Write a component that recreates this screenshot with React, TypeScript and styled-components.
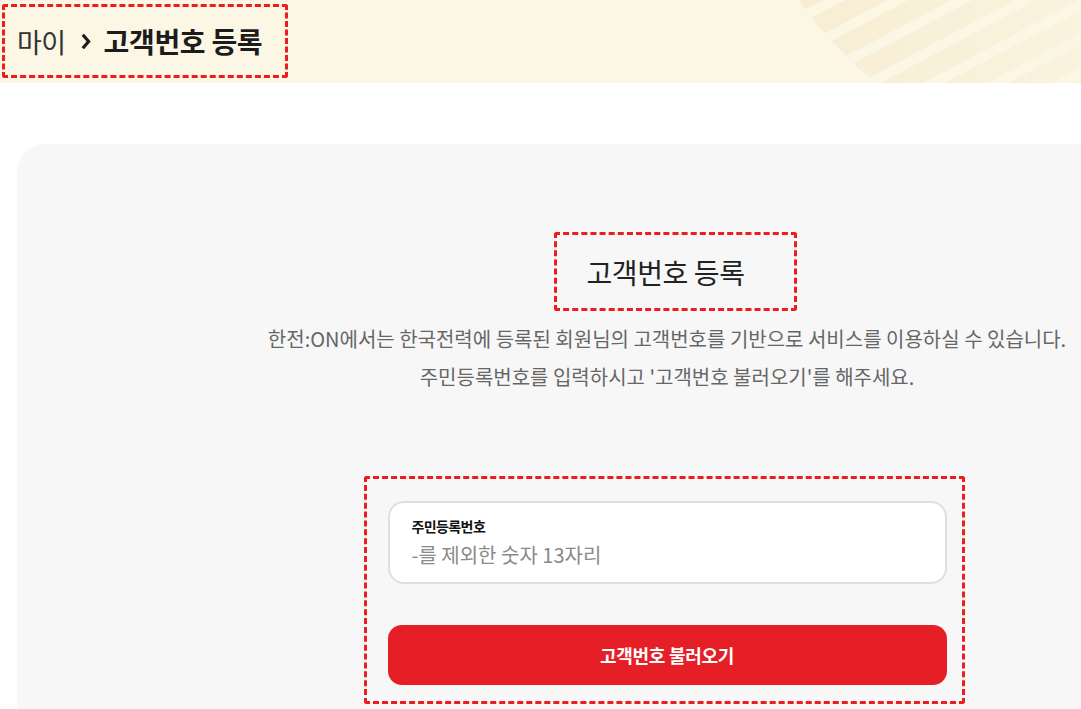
import React from 'react';
import styled, { createGlobalStyle } from 'styled-components';

const GlobalStyle = createGlobalStyle`
  body {
    margin: 0;
    background: #ffffff;
    overflow: hidden;
    font-family: 'Noto Sans CJK KR', 'Noto Sans', sans-serif;
  }
`;

const StyledPage = styled.div({
  width: 1081,
  height: 709,
  overflow: 'hidden',
});

const StyledHeader = styled.header({
  position: 'relative',
  height: 83,
  background: '#FCF6E4',
  padding: '4px 0 0 2px',
  boxSizing: 'border-box',
  overflow: 'hidden',
});

const StyledStripes = styled.svg({
  position: 'absolute',
  top: 0,
  right: 0,
});

const StyledHighlight = styled.div<{ $pad: string }>(({ $pad }) => ({
  border: '3px dashed #EE1C1C',
  borderRadius: 3,
  padding: $pad,
  boxSizing: 'border-box',
  position: 'relative',
}));

const StyledCrumbBox = styled(StyledHighlight)({
  display: 'inline-flex',
  alignItems: 'center',
  width: 286,
  height: 74,
});

const StyledCrumb = styled.span<{ $bold?: boolean }>(({ $bold }) => ({
  fontSize: $bold ? 28 : 27,
  fontWeight: $bold ? 700 : 400,
  color: $bold ? '#1c1c1c' : '#333333',
  letterSpacing: $bold ? -0.3 : -0.6,
}));

const StyledChevron = styled.svg({
  margin: '0 12px 0 16px',
});

const StyledCard = styled.section({
  marginTop: 61,
  marginLeft: 17,
  width: 1300,
  minHeight: 620,
  background: '#F7F7F7',
  borderRadius: 28,
  paddingTop: 88,
  boxSizing: 'border-box',
});

const StyledTitleRow = styled.div({
  display: 'flex',
  justifyContent: 'center',
  paddingLeft: 17,
});

const StyledTitleBox = styled(StyledHighlight)({
  height: 79,
  display: 'flex',
  alignItems: 'center',
});

const StyledTitle = styled.h2({
  margin: 0,
  fontSize: 28,
  fontWeight: 400,
  color: '#222222',
  letterSpacing: -0.4,
});

const StyledDesc = styled.p({
  margin: '9px 0 0',
  textAlign: 'center',
  fontSize: 20,
  lineHeight: '38px',
  color: '#666666',
  letterSpacing: 0,
});

const StyledFormArea = styled.div({
  width: 559,
  margin: '80px auto 0',
});

const StyledFormBox = styled(StyledHighlight)({
  margin: '0 -18px 0 -24px',
});

const StyledField = styled.label({
  display: 'flex',
  flexDirection: 'column',
  justifyContent: 'center',
  height: 83,
  background: '#ffffff',
  border: '2px solid #DDDFE3',
  borderRadius: 16,
  padding: '0 22px',
  boxSizing: 'border-box',
});

const StyledFieldLabel = styled.span({
  fontSize: 14,
  fontWeight: 700,
  color: '#111111',
  lineHeight: '18px',
  letterSpacing: -0.6,
});

const StyledInput = styled.input({
  border: 'none',
  outline: 'none',
  padding: 0,
  marginTop: 6,
  fontFamily: 'inherit',
  fontSize: 20,
  lineHeight: '28px',
  color: '#333333',
  background: 'transparent',
  letterSpacing: 0,
  '&::placeholder': {
    color: '#8A8A8A',
  },
});

const StyledButton = styled.button({
  display: 'block',
  width: '100%',
  height: 60,
  marginTop: 41,
  border: 'none',
  borderRadius: 14,
  background: '#E61E25',
  color: '#ffffff',
  fontFamily: 'inherit',
  fontSize: 18,
  fontWeight: 700,
  letterSpacing: -0.3,
  cursor: 'pointer',
});

const Stripes = () => (
  <StyledStripes width="300" height="83" viewBox="0 0 300 83">
    <defs>
      <pattern
        id="stripe-pattern"
        width="10"
        height="30"
        patternUnits="userSpaceOnUse"
        patternTransform="rotate(-28)"
      >
        <rect width="10" height="20" fill="#F6EDD2" />
      </pattern>
      <linearGradient id="stripe-fade" x1="0" y1="0" x2="1" y2="0">
        <stop offset="0" stopColor="#fff" stopOpacity="1" />
        <stop offset="1" stopColor="#fff" stopOpacity="0.35" />
      </linearGradient>
      <mask id="stripe-mask">
        <rect width="300" height="83" fill="url(#stripe-fade)" />
      </mask>
    </defs>
    <g mask="url(#stripe-mask)">
      <circle cx="370" cy="-250" r="432" fill="url(#stripe-pattern)" />
    </g>
  </StyledStripes>
);

const App: React.FunctionComponent = () => (
  <>
    <GlobalStyle />
    <StyledPage>
      <StyledHeader>
        <Stripes />
        <StyledCrumbBox $pad="0 0 0 12px">
          <StyledCrumb>마이</StyledCrumb>
          <StyledChevron width="10" height="17" viewBox="0 0 10 17">
            <path d="M1.8 1.8 L7.6 8.5 L1.8 15.2" fill="none" stroke="#1c1c1c" strokeWidth="3.2" />
          </StyledChevron>
          <StyledCrumb $bold>고객번호 등록</StyledCrumb>
        </StyledCrumbBox>
      </StyledHeader>
      <StyledCard>
        <StyledTitleRow>
          <StyledTitleBox $pad="0 49px 0 29px">
            <StyledTitle>고객번호 등록</StyledTitle>
          </StyledTitleBox>
        </StyledTitleRow>
        <StyledDesc>
          한전:ON에서는 한국전력에 등록된 회원님의 고객번호를 기반으로 서비스를 이용하실 수 있습니다.
          <br />
          주민등록번호를 입력하시고 '고객번호 불러오기'를 해주세요.
        </StyledDesc>
        <StyledFormArea>
          <StyledFormBox $pad="22px 15px 16px 21px">
            <StyledField>
              <StyledFieldLabel>주민등록번호</StyledFieldLabel>
              <StyledInput placeholder="-를 제외한 숫자 13자리" />
            </StyledField>
            <StyledButton type="button">고객번호 불러오기</StyledButton>
          </StyledFormBox>
        </StyledFormArea>
      </StyledCard>
    </StyledPage>
  </>
);

export default App;
